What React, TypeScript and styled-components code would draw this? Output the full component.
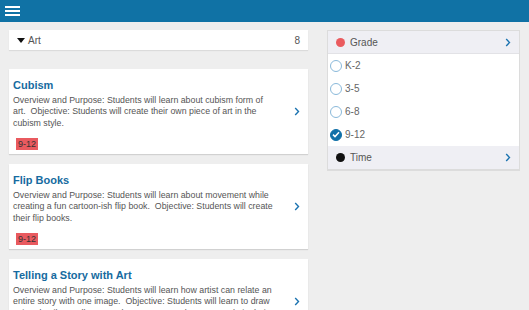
import styled, { createGlobalStyle } from "styled-components";

const GlobalStyle = createGlobalStyle`
    html, body {
        margin: 0;
        padding: 0;
        background: #eeeeee;
        font-family: "Liberation Sans", Arial, sans-serif;
    }
`;

const Page = styled.div`
    width: 529px;
    height: 310px;
    overflow: hidden;
    background: #eeeeee;
`;

const TopBar = styled.div`
    height: 22px;
    background-color: #1072a5;
    display: flex;
    align-items: center;
    padding-left: 5px;
`;

const Burger = styled.div`
    width: 15px;
    display: flex;
    flex-direction: column;
    gap: 2px;
    margin-top: -1px;
`;

const BurgerLine = styled.span`
    display: block;
    height: 2px;
    background: #ffffff;
`;

const Main = styled.div`
    display: flex;
    padding: 8px 9px 0 9px;
    gap: 19px;
    align-items: flex-start;
`;

const LeftCol = styled.div`
    width: 299px;
    display: flex;
    flex-direction: column;
`;

const CategoryBar = styled.div`
    height: 20px;
    background: #ffffff;
    display: flex;
    align-items: center;
    padding: 0 8px 0 8px;
    font-size: 10px;
    color: #555;
    box-shadow: 0 1px 1px rgba(0, 0, 0, 0.08);
    margin-bottom: 19px;
`;

const Caret = styled.span`
    width: 0;
    height: 0;
    border-left: 4px solid transparent;
    border-right: 4px solid transparent;
    border-top: 5px solid #111;
    margin-right: 3px;
`;

const CategoryName = styled.span`
    flex: 1;
`;

const Card = styled.div`
    background: #ffffff;
    height: 85px;
    display: flex;
    align-items: center;
    box-shadow: 0 1px 1px rgba(0, 0, 0, 0.12);
    margin-bottom: 10px;
`;

const CardBody = styled.div`
    width: 264px;
    align-self: flex-start;
    padding: 9px 0 0 4px;
    box-sizing: border-box;
`;

const Title = styled.div`
    color: #166ba0;
    font-weight: bold;
    font-size: 11px;
    line-height: 15px;
    margin-bottom: 2px;
`;

const Desc = styled.div`
    color: #555;
    font-size: 8.8px;
    line-height: 11.3px;
`;

const Badge = styled.span`
    display: inline-block;
    margin: 9px 0 0 3px;
    background: #e95a5f;
    color: #333;
    font-size: 9px;
    line-height: 12px;
    padding: 0 2px;
`;

const ChevronBox = styled.div`
    flex: 1;
    display: flex;
    justify-content: flex-end;
    padding-right: 8px;
`;

const Panel = styled.div`
    width: 193px;
    border: 1px solid #dcdcdc;
    border-bottom-width: 2px;
    box-sizing: border-box;
    background: #ffffff;
`;

const PanelHead = styled.div<{ $bottom?: boolean }>`
    height: 23px;
    background: #efeff4;
    display: flex;
    align-items: center;
    padding: 0 8px 0 8px;
    font-size: 10px;
    color: #555;
    border-bottom: ${(p) => (p.$bottom ? "none" : "1px solid #e2e2e6")};
    box-sizing: border-box;
`;

const Dot = styled.span<{ $color: string }>`
    width: 9px;
    height: 9px;
    border-radius: 50%;
    background: ${(p) => p.$color};
    margin-right: 5px;
`;

const HeadLabel = styled.span`
    flex: 1;
`;

const Option = styled.div`
    height: 23px;
    display: flex;
    align-items: center;
    padding-left: 2px;
    font-size: 10px;
    color: #666;
`;

const Radio = styled.span<{ $checked?: boolean }>`
    width: 12px;
    height: 12px;
    box-sizing: border-box;
    border-radius: 50%;
    border: 1px solid ${(p) => (p.$checked ? "#1070a8" : "#8ab9da")};
    background: ${(p) => (p.$checked ? "#1070a8" : "#fff")};
    margin-right: 3px;
    display: flex;
    align-items: center;
    justify-content: center;
`;

const Chevron = () => (
    <svg width="6" height="9" viewBox="0 0 6 9">
        <path d="M1.2 1 L4.5 4.5 L1.2 8" fill="none" stroke="#1b73b0" strokeWidth="1.4" />
    </svg>
);

const Check = () => (
    <svg width="8" height="7" viewBox="0 0 8 7">
        <path d="M1 3.6 L3 5.6 L7 1.2" fill="none" stroke="#fff" strokeWidth="1.5" />
    </svg>
);

const lessons = [
    {
        title: "Cubism",
        desc: "Overview and Purpose: Students will learn about cubism form of art.\u00a0 Objective: Students will create their own piece of art in the cubism style.",
    },
    {
        title: "Flip Books",
        desc: "Overview and Purpose: Students will learn about movement while creating a fun cartoon-ish flip book.\u00a0 Objective: Students will create their flip books.",
    },
    {
        title: "Telling a Story with Art",
        desc: "Overview and Purpose: Students will learn how artist can relate an entire story with one image.\u00a0 Objective: Students will learn to draw using details to tell a story about an event, place or people in their lives.",
    },
];

const grades = ["K-2", "3-5", "6-8", "9-12"];

const App = () => {
    return (
        <Page>
            <GlobalStyle />
            <TopBar>
                <Burger>
                    <BurgerLine />
                    <BurgerLine />
                    <BurgerLine />
                </Burger>
            </TopBar>
            <Main>
                <LeftCol>
                    <CategoryBar>
                        <Caret />
                        <CategoryName>Art</CategoryName>
                        <span>8</span>
                    </CategoryBar>
                    {lessons.map((l) => (
                        <Card key={l.title}>
                            <CardBody>
                                <Title>{l.title}</Title>
                                <Desc>{l.desc}</Desc>
                                <Badge>9-12</Badge>
                            </CardBody>
                            <ChevronBox>
                                <Chevron />
                            </ChevronBox>
                        </Card>
                    ))}
                </LeftCol>
                <Panel>
                    <PanelHead>
                        <Dot $color="#ea5b5f" />
                        <HeadLabel>Grade</HeadLabel>
                        <Chevron />
                    </PanelHead>
                    {grades.map((g) => (
                        <Option key={g}>
                            <Radio $checked={g === "9-12"}>{g === "9-12" && <Check />}</Radio>
                            {g}
                        </Option>
                    ))}
                    <PanelHead $bottom>
                        <Dot $color="#111" />
                        <HeadLabel>Time</HeadLabel>
                        <Chevron />
                    </PanelHead>
                </Panel>
            </Main>
        </Page>
    );
};

export default App;
